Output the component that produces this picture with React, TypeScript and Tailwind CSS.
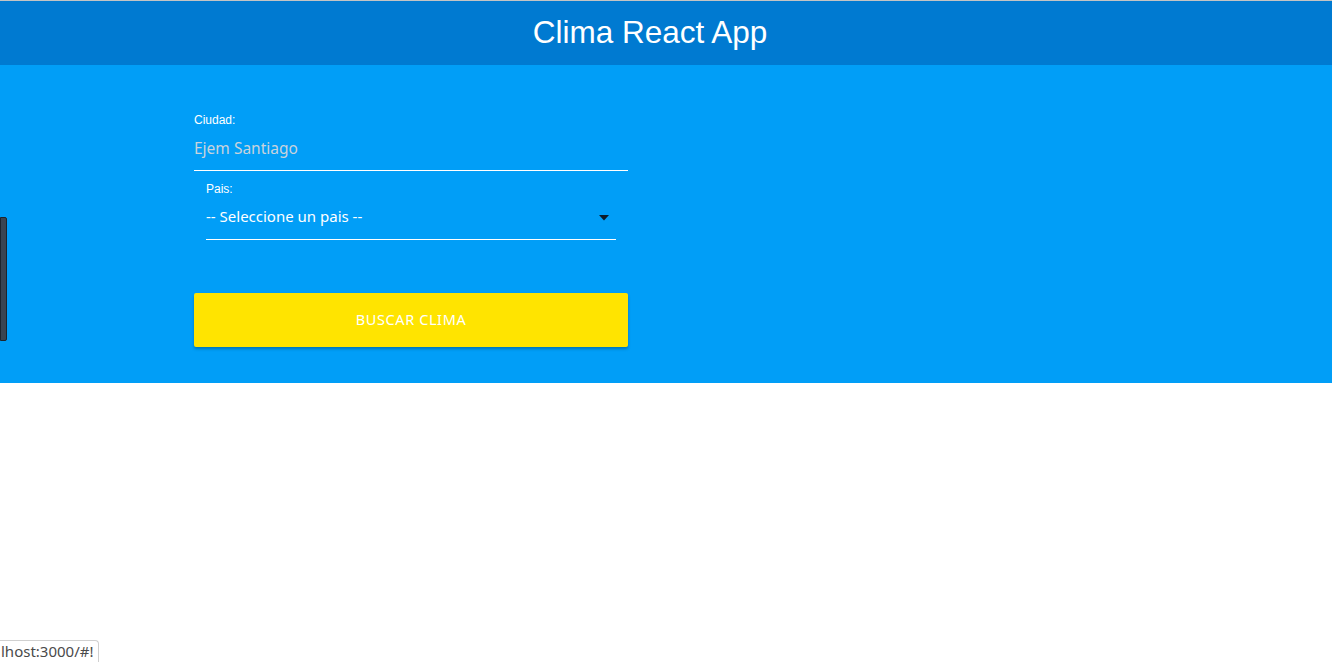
import React from "react";

export default function App() {
  return (
    <div className="min-h-[662px] bg-white relative" style={{ fontFamily: '"Liberation Sans", Arial, sans-serif' }}>
      <div className="h-px bg-[#c4c4c4]" />
      <header className="h-16 bg-[#007ad1] flex items-center justify-center pr-8">
        <h1 className="text-[31.5px] text-white font-normal leading-none">Clima React App</h1>
      </header>
      <main className="bg-[#019ef7] h-[318px] pl-[194px] pt-[49px]">
        <div className="w-[434px] flex flex-col">
          <label className="text-[12px] text-white leading-none pl-0">Ciudad:</label>
          <div className="h-[45px] border-b border-white flex items-center pt-[2px]">
            <span className="text-[15.5px] text-[#c9d3dc]" style={{ fontFamily: '"Noto Sans", sans-serif' }}>Ejem Santiago</span>
          </div>
          <div className="px-3 pt-3">
            <label className="block text-[12px] text-white leading-none">Pais:</label>
            <div className="h-[45px] border-b border-white flex items-center justify-between pb-[2px]">
              <span className="text-[15px] text-white" style={{ fontFamily: '"Noto Sans", sans-serif' }}>-- Seleccione un pais --</span>
              <svg width="10" height="6" viewBox="0 0 10 6" className="mr-[7px] mt-[3px]">
                <path d="M0 0 H10 L5 5.5 Z" fill="#0d1b2a" />
              </svg>
            </div>
          </div>
          <button className="mt-[53px] h-[54px] w-full bg-[#ffe400] rounded-[2px] shadow-[0_2px_3px_rgba(0,0,0,0.25)] text-white text-[14.5px] tracking-[0.6px] uppercase" style={{ fontFamily: '"Noto Sans", sans-serif' }}>
            Buscar clima
          </button>
        </div>
      </main>
      <div className="absolute left-0 top-[217px] w-[7px] h-[124px] bg-[#3a4551] border border-[#1e252c] rounded-r-[2px]" />
      <div className="absolute left-0 bottom-0 h-[22px] pl-[1px] pr-[5px] bg-white border-t border-r border-[#d0d0d0] rounded-tr-[4px] flex items-center">
        <span className="text-[15px] text-[#4a4a4a]" style={{ fontFamily: '"Noto Sans", sans-serif' }}>lhost:3000/#!</span>
      </div>
    </div>
  );
}
